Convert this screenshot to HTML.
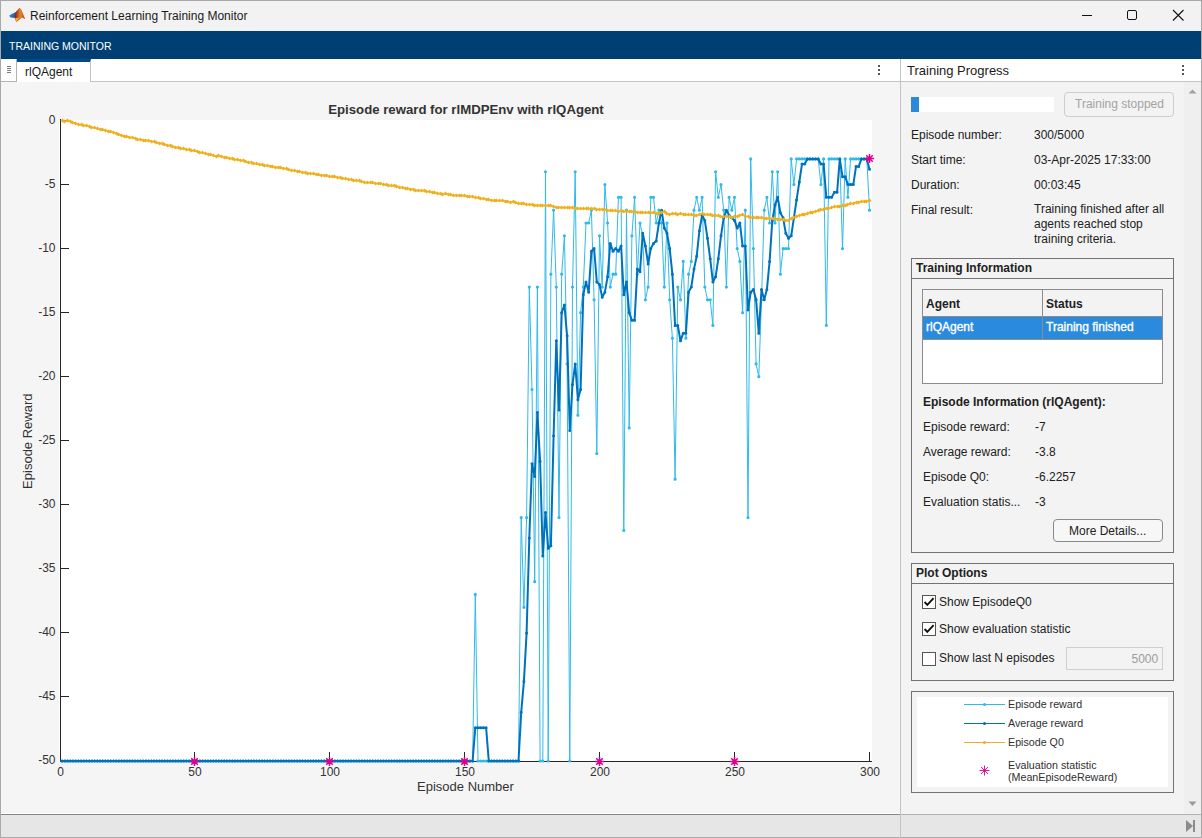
<!DOCTYPE html>
<html><head><meta charset="utf-8">
<style>
*{box-sizing:border-box;margin:0;padding:0}
html,body{width:1202px;height:838px;overflow:hidden;background:#f3f3f3;font-family:"Liberation Sans",sans-serif;color:#212121}
.a{position:absolute}
.t{position:absolute;white-space:nowrap;line-height:1}
#win{position:absolute;left:0;top:0;width:1202px;height:838px;border:1px solid #a9a9a9;border-bottom:none}
#titlebar{left:0;top:0;width:1202px;height:31px;background:#f2f2f2}
#toolbar{left:1px;top:31px;width:1200px;height:28px;background:#003f73}
#tabrow{left:1px;top:59px;width:1200px;height:23px;background:#fff;border-bottom:1px solid #c4c4c4}
#leftdoc{left:1px;top:82px;width:899px;height:732px;background:#f5f5f5}
#divider{left:900px;top:59px;width:1px;height:779px;background:#c4c4c4}
#rightpanel{left:901px;top:82px;width:300px;height:732px;background:#f3f3f3}
#scroll{left:1184px;top:82px;width:17px;height:732px;background:#efefef}
#status{left:1px;top:814px;width:1200px;height:23px;background:#e6e6e6;border-top:1px solid #b3b3b3}
.box{position:absolute;border:1px solid #727272}
.lbl{font-size:12px;margin-top:1px}
</style></head><body>
<div id="win"></div>
<div class="a" id="titlebar"></div>
<div class="a" style="left:0;top:0;width:1202px;height:1px;background:#a9a9a9"></div>
<div class="a" style="left:0;top:0;width:1px;height:838px;background:#a9a9a9"></div>
<div class="a" style="left:1201px;top:0;width:1px;height:838px;background:#a9a9a9"></div>
<!-- logo -->
<svg class="a" style="left:0;top:0" width="30" height="30" viewBox="0 0 30 30">
  <defs>
    <linearGradient id="lg1" x1="0" y1="0" x2="1" y2="0.3"><stop offset="0" stop-color="#2f86d6"/><stop offset="1" stop-color="#1a5fae"/></linearGradient>
    <linearGradient id="lg2" x1="0" y1="0" x2="1" y2="0"><stop offset="0" stop-color="#7a1616"/><stop offset="0.55" stop-color="#e8852a"/><stop offset="1" stop-color="#c9361c"/></linearGradient>
  </defs>
  <path d="M9.3 15.6 L12.8 13.4 L15.6 12.2 L18.4 9.6 L19.8 8 L17 15 L15.8 17 L13.2 17.9 L10.2 17.2 Z" fill="url(#lg1)"/>
  <path d="M15 13.2 L19.4 7.8 L21.2 9.2 L25.2 19.2 L22.2 17.4 L16.4 21.9 L14.4 17.4 Z" fill="url(#lg2)"/>
  <path d="M16.4 21.9 L14.9 18.5 L19.5 17.2 Z" fill="#f2b12e"/>
</svg>
<div class="t" style="left:30px;top:10px;font-size:12px;color:#1a1a1a">Reinforcement Learning Training Monitor</div>
<!-- window controls -->
<div class="a" style="left:1082px;top:15px;width:10px;height:1px;background:#111"></div>
<div class="a" style="left:1127px;top:10px;width:10px;height:10px;border:1px solid #111;border-radius:2px"></div>
<svg class="a" style="left:1172px;top:9px" width="13" height="13" viewBox="0 0 13 13"><path d="M1 1 L11.5 11.5 M11.5 1 L1 11.5" stroke="#111" stroke-width="1.1"/></svg>

<div class="a" id="toolbar"></div>
<div class="t" style="left:9px;top:41px;font-size:10.5px;color:#fff">TRAINING MONITOR</div>

<div class="a" id="tabrow"></div>
<div class="a" style="left:1px;top:59px;width:16px;height:23px;background:#fff;border-right:1px solid #b4b4b4;border-bottom:1px solid #b4b4b4"></div>
<div class="a" style="left:7px;top:66px;width:4px;height:1px;background:#7a7a7a;box-shadow:0 2px 0 #7a7a7a,0 4px 0 #7a7a7a,0 6px 0 #7a7a7a"></div>
<div class="a" style="left:17px;top:59px;width:74px;height:23px;background:#fff;border-top:3px solid #004a8a;border-right:1px solid #c4c4c4"></div>
<div class="t" style="left:25px;top:66px;font-size:12px;color:#1a1a1a">rlQAgent</div>
<div class="a" id="leftdoc"></div>
<div class="a" id="rightpanel"></div>
<div class="a" id="scroll"></div>
<div class="a" id="status"></div>
<div class="a" style="left:1px;top:813px;width:899px;height:1px;background:#fff"></div>
<div class="a" style="left:1px;top:814px;width:899px;height:1px;background:#858585"></div>
<div class="a" style="left:0;top:837px;width:1202px;height:1px;background:#a9a9a9"></div>
<div class="a" id="divider"></div>

<svg class="a" style="left:0;top:0" width="900" height="814" viewBox="0 0 900 814">
<rect x="59" y="120" width="813" height="642" fill="#fff"/>
<path d="M60.5 119V761.5M60 761.5H872" stroke="#262626" stroke-width="1" fill="none"/>
<path d="M60 120.5h9M60 184.5h9M60 248.5h9M60 312.5h9M60 376.5h9M60 440.5h9M60 504.5h9M60 568.5h9M60 632.5h9M60 696.5h9M60 761.5h9M60.5 761v-9M194.5 761v-9M329.5 761v-9M464.5 761v-9M599.5 761v-9M734.5 761v-9M869.5 761v-9" stroke="#262626" stroke-width="1" fill="none"/>
<polyline points="62.20,761.00 64.90,761.00 67.60,761.00 70.30,761.00 73.00,761.00 75.70,761.00 78.40,761.00 81.10,761.00 83.80,761.00 86.50,761.00 89.20,761.00 91.90,761.00 94.60,761.00 97.30,761.00 100.00,761.00 102.70,761.00 105.40,761.00 108.10,761.00 110.80,761.00 113.50,761.00 116.20,761.00 118.90,761.00 121.60,761.00 124.30,761.00 127.00,761.00 129.70,761.00 132.40,761.00 135.10,761.00 137.80,761.00 140.50,761.00 143.20,761.00 145.90,761.00 148.60,761.00 151.30,761.00 154.00,761.00 156.70,761.00 159.40,761.00 162.10,761.00 164.80,761.00 167.50,761.00 170.20,761.00 172.90,761.00 175.60,761.00 178.30,761.00 181.00,761.00 183.70,761.00 186.40,761.00 189.10,761.00 191.80,761.00 194.50,761.00 197.20,761.00 199.90,761.00 202.60,761.00 205.30,761.00 208.00,761.00 210.70,761.00 213.40,761.00 216.10,761.00 218.80,761.00 221.50,761.00 224.20,761.00 226.90,761.00 229.60,761.00 232.30,761.00 235.00,761.00 237.70,761.00 240.40,761.00 243.10,761.00 245.80,761.00 248.50,761.00 251.20,761.00 253.90,761.00 256.60,761.00 259.30,761.00 262.00,761.00 264.70,761.00 267.40,761.00 270.10,761.00 272.80,761.00 275.50,761.00 278.20,761.00 280.90,761.00 283.60,761.00 286.30,761.00 289.00,761.00 291.70,761.00 294.40,761.00 297.10,761.00 299.80,761.00 302.50,761.00 305.20,761.00 307.90,761.00 310.60,761.00 313.30,761.00 316.00,761.00 318.70,761.00 321.40,761.00 324.10,761.00 326.80,761.00 329.50,761.00 332.20,761.00 334.90,761.00 337.60,761.00 340.30,761.00 343.00,761.00 345.70,761.00 348.40,761.00 351.10,761.00 353.80,761.00 356.50,761.00 359.20,761.00 361.90,761.00 364.60,761.00 367.30,761.00 370.00,761.00 372.70,761.00 375.40,761.00 378.10,761.00 380.80,761.00 383.50,761.00 386.20,761.00 388.90,761.00 391.60,761.00 394.30,761.00 397.00,761.00 399.70,761.00 402.40,761.00 405.10,761.00 407.80,761.00 410.50,761.00 413.20,761.00 415.90,761.00 418.60,761.00 421.30,761.00 424.00,761.00 426.70,761.00 429.40,761.00 432.10,761.00 434.80,761.00 437.50,761.00 440.20,761.00 442.90,761.00 445.60,761.00 448.30,761.00 451.00,761.00 453.70,761.00 456.40,761.00 459.10,761.00 461.80,761.00 464.50,761.00 467.20,761.00 469.90,761.00 472.60,761.00 475.30,594.47 478.00,761.00 480.70,761.00 483.40,761.00 486.10,761.00 488.80,761.00 491.50,761.00 494.20,761.00 496.90,761.00 499.60,761.00 502.30,761.00 505.00,761.00 507.70,761.00 510.40,761.00 513.10,761.00 515.80,761.00 518.50,761.00 521.20,517.61 523.90,607.28 526.60,517.61 529.30,287.03 532.00,389.51 534.70,581.66 537.40,287.03 540.10,761.00 542.80,761.00 545.50,171.74 548.20,761.00 550.90,274.22 553.60,210.17 556.30,287.03 559.00,517.61 561.70,274.22 564.40,235.79 567.10,363.89 569.80,761.00 572.50,287.03 575.20,171.74 577.90,415.13 580.60,312.65 583.30,287.03 586.00,222.98 588.70,222.98 591.40,210.17 594.10,299.84 596.80,453.56 599.50,235.79 602.20,287.03 604.90,184.55 607.60,222.98 610.30,287.03 613.00,274.22 615.70,274.22 618.40,197.36 621.10,197.36 623.80,530.42 626.50,210.17 629.20,427.94 631.90,235.79 634.60,197.36 637.30,274.22 640.00,222.98 642.70,235.79 645.40,299.84 648.10,287.03 650.80,197.36 653.50,197.36 656.20,222.98 658.90,210.17 661.60,222.98 664.30,287.03 667.00,222.98 669.70,299.84 672.40,338.27 675.10,479.18 677.80,287.03 680.50,299.84 683.20,261.41 685.90,338.27 688.60,274.22 691.30,261.41 694.00,210.17 696.70,197.36 699.40,210.17 702.10,197.36 704.80,287.03 707.50,299.84 710.20,299.84 712.90,325.46 715.60,171.74 718.30,197.36 721.00,184.55 723.70,210.17 726.40,287.03 729.10,197.36 731.80,210.17 734.50,197.36 737.20,248.60 739.90,261.41 742.60,312.65 745.30,210.17 748.00,517.61 750.70,158.93 753.40,248.60 756.10,363.89 758.80,376.70 761.50,299.84 764.20,210.17 766.90,197.36 769.60,222.98 772.30,171.74 775.00,222.98 777.70,171.74 780.40,274.22 783.10,248.60 785.80,248.60 788.50,248.60 791.20,158.93 793.90,184.55 796.60,158.93 799.30,158.93 802.00,158.93 804.70,158.93 807.40,158.93 810.10,158.93 812.80,158.93 815.50,158.93 818.20,158.93 820.90,184.55 823.60,158.93 826.30,325.46 829.00,158.93 831.70,158.93 834.40,158.93 837.10,158.93 839.80,158.93 842.50,248.60 845.20,158.93 847.90,197.36 850.60,158.93 853.30,158.93 856.00,158.93 858.70,158.93 861.40,158.93 864.10,158.93 866.80,158.93 869.50,210.17" fill="none" stroke="#30baec" stroke-width="1" stroke-linejoin="round"/>
<path d="M62.20 761.00h0M64.90 761.00h0M67.60 761.00h0M70.30 761.00h0M73.00 761.00h0M75.70 761.00h0M78.40 761.00h0M81.10 761.00h0M83.80 761.00h0M86.50 761.00h0M89.20 761.00h0M91.90 761.00h0M94.60 761.00h0M97.30 761.00h0M100.00 761.00h0M102.70 761.00h0M105.40 761.00h0M108.10 761.00h0M110.80 761.00h0M113.50 761.00h0M116.20 761.00h0M118.90 761.00h0M121.60 761.00h0M124.30 761.00h0M127.00 761.00h0M129.70 761.00h0M132.40 761.00h0M135.10 761.00h0M137.80 761.00h0M140.50 761.00h0M143.20 761.00h0M145.90 761.00h0M148.60 761.00h0M151.30 761.00h0M154.00 761.00h0M156.70 761.00h0M159.40 761.00h0M162.10 761.00h0M164.80 761.00h0M167.50 761.00h0M170.20 761.00h0M172.90 761.00h0M175.60 761.00h0M178.30 761.00h0M181.00 761.00h0M183.70 761.00h0M186.40 761.00h0M189.10 761.00h0M191.80 761.00h0M194.50 761.00h0M197.20 761.00h0M199.90 761.00h0M202.60 761.00h0M205.30 761.00h0M208.00 761.00h0M210.70 761.00h0M213.40 761.00h0M216.10 761.00h0M218.80 761.00h0M221.50 761.00h0M224.20 761.00h0M226.90 761.00h0M229.60 761.00h0M232.30 761.00h0M235.00 761.00h0M237.70 761.00h0M240.40 761.00h0M243.10 761.00h0M245.80 761.00h0M248.50 761.00h0M251.20 761.00h0M253.90 761.00h0M256.60 761.00h0M259.30 761.00h0M262.00 761.00h0M264.70 761.00h0M267.40 761.00h0M270.10 761.00h0M272.80 761.00h0M275.50 761.00h0M278.20 761.00h0M280.90 761.00h0M283.60 761.00h0M286.30 761.00h0M289.00 761.00h0M291.70 761.00h0M294.40 761.00h0M297.10 761.00h0M299.80 761.00h0M302.50 761.00h0M305.20 761.00h0M307.90 761.00h0M310.60 761.00h0M313.30 761.00h0M316.00 761.00h0M318.70 761.00h0M321.40 761.00h0M324.10 761.00h0M326.80 761.00h0M329.50 761.00h0M332.20 761.00h0M334.90 761.00h0M337.60 761.00h0M340.30 761.00h0M343.00 761.00h0M345.70 761.00h0M348.40 761.00h0M351.10 761.00h0M353.80 761.00h0M356.50 761.00h0M359.20 761.00h0M361.90 761.00h0M364.60 761.00h0M367.30 761.00h0M370.00 761.00h0M372.70 761.00h0M375.40 761.00h0M378.10 761.00h0M380.80 761.00h0M383.50 761.00h0M386.20 761.00h0M388.90 761.00h0M391.60 761.00h0M394.30 761.00h0M397.00 761.00h0M399.70 761.00h0M402.40 761.00h0M405.10 761.00h0M407.80 761.00h0M410.50 761.00h0M413.20 761.00h0M415.90 761.00h0M418.60 761.00h0M421.30 761.00h0M424.00 761.00h0M426.70 761.00h0M429.40 761.00h0M432.10 761.00h0M434.80 761.00h0M437.50 761.00h0M440.20 761.00h0M442.90 761.00h0M445.60 761.00h0M448.30 761.00h0M451.00 761.00h0M453.70 761.00h0M456.40 761.00h0M459.10 761.00h0M461.80 761.00h0M464.50 761.00h0M467.20 761.00h0M469.90 761.00h0M472.60 761.00h0M475.30 594.47h0M478.00 761.00h0M480.70 761.00h0M483.40 761.00h0M486.10 761.00h0M488.80 761.00h0M491.50 761.00h0M494.20 761.00h0M496.90 761.00h0M499.60 761.00h0M502.30 761.00h0M505.00 761.00h0M507.70 761.00h0M510.40 761.00h0M513.10 761.00h0M515.80 761.00h0M518.50 761.00h0M521.20 517.61h0M523.90 607.28h0M526.60 517.61h0M529.30 287.03h0M532.00 389.51h0M534.70 581.66h0M537.40 287.03h0M540.10 761.00h0M542.80 761.00h0M545.50 171.74h0M548.20 761.00h0M550.90 274.22h0M553.60 210.17h0M556.30 287.03h0M559.00 517.61h0M561.70 274.22h0M564.40 235.79h0M567.10 363.89h0M569.80 761.00h0M572.50 287.03h0M575.20 171.74h0M577.90 415.13h0M580.60 312.65h0M583.30 287.03h0M586.00 222.98h0M588.70 222.98h0M591.40 210.17h0M594.10 299.84h0M596.80 453.56h0M599.50 235.79h0M602.20 287.03h0M604.90 184.55h0M607.60 222.98h0M610.30 287.03h0M613.00 274.22h0M615.70 274.22h0M618.40 197.36h0M621.10 197.36h0M623.80 530.42h0M626.50 210.17h0M629.20 427.94h0M631.90 235.79h0M634.60 197.36h0M637.30 274.22h0M640.00 222.98h0M642.70 235.79h0M645.40 299.84h0M648.10 287.03h0M650.80 197.36h0M653.50 197.36h0M656.20 222.98h0M658.90 210.17h0M661.60 222.98h0M664.30 287.03h0M667.00 222.98h0M669.70 299.84h0M672.40 338.27h0M675.10 479.18h0M677.80 287.03h0M680.50 299.84h0M683.20 261.41h0M685.90 338.27h0M688.60 274.22h0M691.30 261.41h0M694.00 210.17h0M696.70 197.36h0M699.40 210.17h0M702.10 197.36h0M704.80 287.03h0M707.50 299.84h0M710.20 299.84h0M712.90 325.46h0M715.60 171.74h0M718.30 197.36h0M721.00 184.55h0M723.70 210.17h0M726.40 287.03h0M729.10 197.36h0M731.80 210.17h0M734.50 197.36h0M737.20 248.60h0M739.90 261.41h0M742.60 312.65h0M745.30 210.17h0M748.00 517.61h0M750.70 158.93h0M753.40 248.60h0M756.10 363.89h0M758.80 376.70h0M761.50 299.84h0M764.20 210.17h0M766.90 197.36h0M769.60 222.98h0M772.30 171.74h0M775.00 222.98h0M777.70 171.74h0M780.40 274.22h0M783.10 248.60h0M785.80 248.60h0M788.50 248.60h0M791.20 158.93h0M793.90 184.55h0M796.60 158.93h0M799.30 158.93h0M802.00 158.93h0M804.70 158.93h0M807.40 158.93h0M810.10 158.93h0M812.80 158.93h0M815.50 158.93h0M818.20 158.93h0M820.90 184.55h0M823.60 158.93h0M826.30 325.46h0M829.00 158.93h0M831.70 158.93h0M834.40 158.93h0M837.10 158.93h0M839.80 158.93h0M842.50 248.60h0M845.20 158.93h0M847.90 197.36h0M850.60 158.93h0M853.30 158.93h0M856.00 158.93h0M858.70 158.93h0M861.40 158.93h0M864.10 158.93h0M866.80 158.93h0M869.50 210.17h0" stroke="#30baec" stroke-width="3.2" stroke-linecap="round"/>
<polyline points="62.20,761.00 64.90,761.00 67.60,761.00 70.30,761.00 73.00,761.00 75.70,761.00 78.40,761.00 81.10,761.00 83.80,761.00 86.50,761.00 89.20,761.00 91.90,761.00 94.60,761.00 97.30,761.00 100.00,761.00 102.70,761.00 105.40,761.00 108.10,761.00 110.80,761.00 113.50,761.00 116.20,761.00 118.90,761.00 121.60,761.00 124.30,761.00 127.00,761.00 129.70,761.00 132.40,761.00 135.10,761.00 137.80,761.00 140.50,761.00 143.20,761.00 145.90,761.00 148.60,761.00 151.30,761.00 154.00,761.00 156.70,761.00 159.40,761.00 162.10,761.00 164.80,761.00 167.50,761.00 170.20,761.00 172.90,761.00 175.60,761.00 178.30,761.00 181.00,761.00 183.70,761.00 186.40,761.00 189.10,761.00 191.80,761.00 194.50,761.00 197.20,761.00 199.90,761.00 202.60,761.00 205.30,761.00 208.00,761.00 210.70,761.00 213.40,761.00 216.10,761.00 218.80,761.00 221.50,761.00 224.20,761.00 226.90,761.00 229.60,761.00 232.30,761.00 235.00,761.00 237.70,761.00 240.40,761.00 243.10,761.00 245.80,761.00 248.50,761.00 251.20,761.00 253.90,761.00 256.60,761.00 259.30,761.00 262.00,761.00 264.70,761.00 267.40,761.00 270.10,761.00 272.80,761.00 275.50,761.00 278.20,761.00 280.90,761.00 283.60,761.00 286.30,761.00 289.00,761.00 291.70,761.00 294.40,761.00 297.10,761.00 299.80,761.00 302.50,761.00 305.20,761.00 307.90,761.00 310.60,761.00 313.30,761.00 316.00,761.00 318.70,761.00 321.40,761.00 324.10,761.00 326.80,761.00 329.50,761.00 332.20,761.00 334.90,761.00 337.60,761.00 340.30,761.00 343.00,761.00 345.70,761.00 348.40,761.00 351.10,761.00 353.80,761.00 356.50,761.00 359.20,761.00 361.90,761.00 364.60,761.00 367.30,761.00 370.00,761.00 372.70,761.00 375.40,761.00 378.10,761.00 380.80,761.00 383.50,761.00 386.20,761.00 388.90,761.00 391.60,761.00 394.30,761.00 397.00,761.00 399.70,761.00 402.40,761.00 405.10,761.00 407.80,761.00 410.50,761.00 413.20,761.00 415.90,761.00 418.60,761.00 421.30,761.00 424.00,761.00 426.70,761.00 429.40,761.00 432.10,761.00 434.80,761.00 437.50,761.00 440.20,761.00 442.90,761.00 445.60,761.00 448.30,761.00 451.00,761.00 453.70,761.00 456.40,761.00 459.10,761.00 461.80,761.00 464.50,761.00 467.20,761.00 469.90,761.00 472.60,761.00 475.30,727.69 478.00,727.69 480.70,727.69 483.40,727.69 486.10,727.69 488.80,761.00 491.50,761.00 494.20,761.00 496.90,761.00 499.60,761.00 502.30,761.00 505.00,761.00 507.70,761.00 510.40,761.00 513.10,761.00 515.80,761.00 518.50,761.00 521.20,712.32 523.90,681.58 526.60,632.90 529.30,538.11 532.00,463.81 534.70,476.62 537.40,412.57 540.10,461.25 542.80,556.04 545.50,512.49 548.20,548.35 550.90,545.79 553.60,435.63 556.30,340.83 559.00,410.01 561.70,312.65 564.40,304.96 567.10,335.71 569.80,430.50 572.50,384.39 575.20,363.89 577.90,399.76 580.60,389.51 583.30,294.72 586.00,281.91 588.70,292.15 591.40,251.16 594.10,248.60 596.80,281.91 599.50,284.47 602.20,297.28 604.90,292.15 607.60,276.78 610.30,243.48 613.00,251.16 615.70,248.60 618.40,251.16 621.10,246.04 623.80,294.72 626.50,281.91 629.20,312.65 631.90,320.34 634.60,320.34 637.30,269.10 640.00,271.66 642.70,233.23 645.40,246.04 648.10,263.97 650.80,248.60 653.50,243.48 656.20,240.91 658.90,222.98 661.60,210.17 664.30,228.10 667.00,233.23 669.70,248.60 672.40,274.22 675.10,325.46 677.80,325.46 680.50,340.83 683.20,333.15 685.90,333.15 688.60,292.15 691.30,287.03 694.00,269.10 696.70,256.29 699.40,230.67 702.10,215.29 704.80,220.42 707.50,238.35 710.20,258.85 712.90,281.91 715.60,276.78 718.30,258.85 721.00,235.79 723.70,217.86 726.40,210.17 729.10,215.29 731.80,217.86 734.50,220.42 737.20,228.10 739.90,222.98 742.60,246.04 745.30,246.04 748.00,310.09 750.70,292.15 753.40,289.59 756.10,299.84 758.80,333.15 761.50,289.59 764.20,299.84 766.90,289.59 769.60,261.41 772.30,220.42 775.00,205.05 777.70,197.36 780.40,212.73 783.10,217.86 785.80,233.23 788.50,238.35 791.20,235.79 793.90,217.86 796.60,199.92 799.30,181.99 802.00,164.05 804.70,164.05 807.40,158.93 810.10,158.93 812.80,158.93 815.50,158.93 818.20,158.93 820.90,164.05 823.60,164.05 826.30,197.36 829.00,197.36 831.70,197.36 834.40,192.24 837.10,192.24 839.80,158.93 842.50,176.86 845.20,176.86 847.90,184.55 850.60,184.55 853.30,184.55 856.00,166.62 858.70,166.62 861.40,158.93 864.10,158.93 866.80,158.93 869.50,169.18" fill="none" stroke="#0072bd" stroke-width="2" stroke-linejoin="round"/>
<path d="M62.20 761.00h0M64.90 761.00h0M67.60 761.00h0M70.30 761.00h0M73.00 761.00h0M75.70 761.00h0M78.40 761.00h0M81.10 761.00h0M83.80 761.00h0M86.50 761.00h0M89.20 761.00h0M91.90 761.00h0M94.60 761.00h0M97.30 761.00h0M100.00 761.00h0M102.70 761.00h0M105.40 761.00h0M108.10 761.00h0M110.80 761.00h0M113.50 761.00h0M116.20 761.00h0M118.90 761.00h0M121.60 761.00h0M124.30 761.00h0M127.00 761.00h0M129.70 761.00h0M132.40 761.00h0M135.10 761.00h0M137.80 761.00h0M140.50 761.00h0M143.20 761.00h0M145.90 761.00h0M148.60 761.00h0M151.30 761.00h0M154.00 761.00h0M156.70 761.00h0M159.40 761.00h0M162.10 761.00h0M164.80 761.00h0M167.50 761.00h0M170.20 761.00h0M172.90 761.00h0M175.60 761.00h0M178.30 761.00h0M181.00 761.00h0M183.70 761.00h0M186.40 761.00h0M189.10 761.00h0M191.80 761.00h0M194.50 761.00h0M197.20 761.00h0M199.90 761.00h0M202.60 761.00h0M205.30 761.00h0M208.00 761.00h0M210.70 761.00h0M213.40 761.00h0M216.10 761.00h0M218.80 761.00h0M221.50 761.00h0M224.20 761.00h0M226.90 761.00h0M229.60 761.00h0M232.30 761.00h0M235.00 761.00h0M237.70 761.00h0M240.40 761.00h0M243.10 761.00h0M245.80 761.00h0M248.50 761.00h0M251.20 761.00h0M253.90 761.00h0M256.60 761.00h0M259.30 761.00h0M262.00 761.00h0M264.70 761.00h0M267.40 761.00h0M270.10 761.00h0M272.80 761.00h0M275.50 761.00h0M278.20 761.00h0M280.90 761.00h0M283.60 761.00h0M286.30 761.00h0M289.00 761.00h0M291.70 761.00h0M294.40 761.00h0M297.10 761.00h0M299.80 761.00h0M302.50 761.00h0M305.20 761.00h0M307.90 761.00h0M310.60 761.00h0M313.30 761.00h0M316.00 761.00h0M318.70 761.00h0M321.40 761.00h0M324.10 761.00h0M326.80 761.00h0M329.50 761.00h0M332.20 761.00h0M334.90 761.00h0M337.60 761.00h0M340.30 761.00h0M343.00 761.00h0M345.70 761.00h0M348.40 761.00h0M351.10 761.00h0M353.80 761.00h0M356.50 761.00h0M359.20 761.00h0M361.90 761.00h0M364.60 761.00h0M367.30 761.00h0M370.00 761.00h0M372.70 761.00h0M375.40 761.00h0M378.10 761.00h0M380.80 761.00h0M383.50 761.00h0M386.20 761.00h0M388.90 761.00h0M391.60 761.00h0M394.30 761.00h0M397.00 761.00h0M399.70 761.00h0M402.40 761.00h0M405.10 761.00h0M407.80 761.00h0M410.50 761.00h0M413.20 761.00h0M415.90 761.00h0M418.60 761.00h0M421.30 761.00h0M424.00 761.00h0M426.70 761.00h0M429.40 761.00h0M432.10 761.00h0M434.80 761.00h0M437.50 761.00h0M440.20 761.00h0M442.90 761.00h0M445.60 761.00h0M448.30 761.00h0M451.00 761.00h0M453.70 761.00h0M456.40 761.00h0M459.10 761.00h0M461.80 761.00h0M464.50 761.00h0M467.20 761.00h0M469.90 761.00h0M472.60 761.00h0M475.30 727.69h0M478.00 727.69h0M480.70 727.69h0M483.40 727.69h0M486.10 727.69h0M488.80 761.00h0M491.50 761.00h0M494.20 761.00h0M496.90 761.00h0M499.60 761.00h0M502.30 761.00h0M505.00 761.00h0M507.70 761.00h0M510.40 761.00h0M513.10 761.00h0M515.80 761.00h0M518.50 761.00h0M521.20 712.32h0M523.90 681.58h0M526.60 632.90h0M529.30 538.11h0M532.00 463.81h0M534.70 476.62h0M537.40 412.57h0M540.10 461.25h0M542.80 556.04h0M545.50 512.49h0M548.20 548.35h0M550.90 545.79h0M553.60 435.63h0M556.30 340.83h0M559.00 410.01h0M561.70 312.65h0M564.40 304.96h0M567.10 335.71h0M569.80 430.50h0M572.50 384.39h0M575.20 363.89h0M577.90 399.76h0M580.60 389.51h0M583.30 294.72h0M586.00 281.91h0M588.70 292.15h0M591.40 251.16h0M594.10 248.60h0M596.80 281.91h0M599.50 284.47h0M602.20 297.28h0M604.90 292.15h0M607.60 276.78h0M610.30 243.48h0M613.00 251.16h0M615.70 248.60h0M618.40 251.16h0M621.10 246.04h0M623.80 294.72h0M626.50 281.91h0M629.20 312.65h0M631.90 320.34h0M634.60 320.34h0M637.30 269.10h0M640.00 271.66h0M642.70 233.23h0M645.40 246.04h0M648.10 263.97h0M650.80 248.60h0M653.50 243.48h0M656.20 240.91h0M658.90 222.98h0M661.60 210.17h0M664.30 228.10h0M667.00 233.23h0M669.70 248.60h0M672.40 274.22h0M675.10 325.46h0M677.80 325.46h0M680.50 340.83h0M683.20 333.15h0M685.90 333.15h0M688.60 292.15h0M691.30 287.03h0M694.00 269.10h0M696.70 256.29h0M699.40 230.67h0M702.10 215.29h0M704.80 220.42h0M707.50 238.35h0M710.20 258.85h0M712.90 281.91h0M715.60 276.78h0M718.30 258.85h0M721.00 235.79h0M723.70 217.86h0M726.40 210.17h0M729.10 215.29h0M731.80 217.86h0M734.50 220.42h0M737.20 228.10h0M739.90 222.98h0M742.60 246.04h0M745.30 246.04h0M748.00 310.09h0M750.70 292.15h0M753.40 289.59h0M756.10 299.84h0M758.80 333.15h0M761.50 289.59h0M764.20 299.84h0M766.90 289.59h0M769.60 261.41h0M772.30 220.42h0M775.00 205.05h0M777.70 197.36h0M780.40 212.73h0M783.10 217.86h0M785.80 233.23h0M788.50 238.35h0M791.20 235.79h0M793.90 217.86h0M796.60 199.92h0M799.30 181.99h0M802.00 164.05h0M804.70 164.05h0M807.40 158.93h0M810.10 158.93h0M812.80 158.93h0M815.50 158.93h0M818.20 158.93h0M820.90 164.05h0M823.60 164.05h0M826.30 197.36h0M829.00 197.36h0M831.70 197.36h0M834.40 192.24h0M837.10 192.24h0M839.80 158.93h0M842.50 176.86h0M845.20 176.86h0M847.90 184.55h0M850.60 184.55h0M853.30 184.55h0M856.00 166.62h0M858.70 166.62h0M861.40 158.93h0M864.10 158.93h0M866.80 158.93h0M869.50 169.18h0" stroke="#0072bd" stroke-width="3" stroke-linecap="round"/>
<polyline points="62.20,120.50 64.90,121.06 67.60,120.55 70.30,121.63 73.00,122.50 75.70,123.35 78.40,124.41 81.10,124.71 83.80,125.47 86.50,125.31 89.20,126.54 91.90,127.29 94.60,127.93 97.30,128.67 100.00,129.40 102.70,129.93 105.40,130.43 108.10,131.23 110.80,131.70 113.50,132.73 116.20,133.49 118.90,134.01 121.60,135.00 124.30,136.01 127.00,136.74 129.70,137.21 132.40,137.55 135.10,138.58 137.80,139.18 140.50,139.55 143.20,140.53 145.90,140.80 148.60,140.97 151.30,141.42 154.00,141.91 156.70,142.19 159.40,143.25 162.10,143.20 164.80,144.33 167.50,145.23 170.20,145.61 172.90,146.28 175.60,147.26 178.30,148.00 181.00,148.34 183.70,148.92 186.40,149.19 189.10,149.88 191.80,150.54 194.50,150.95 197.20,151.80 199.90,152.54 202.60,152.84 205.30,153.44 208.00,154.20 210.70,154.86 213.40,155.13 216.10,156.12 218.80,155.97 221.50,156.47 224.20,157.34 226.90,157.49 229.60,158.22 232.30,158.43 235.00,159.50 237.70,159.82 240.40,160.05 243.10,160.50 245.80,161.78 248.50,162.10 251.20,162.58 253.90,163.40 256.60,163.62 259.30,164.80 262.00,164.94 264.70,165.60 267.40,165.52 270.10,166.19 272.80,166.65 275.50,167.30 278.20,167.12 280.90,167.81 283.60,168.33 286.30,168.77 289.00,169.44 291.70,170.14 294.40,170.68 297.10,171.16 299.80,171.23 302.50,172.25 305.20,172.57 307.90,173.00 310.60,173.36 313.30,173.70 316.00,174.47 318.70,174.97 321.40,175.05 324.10,175.23 326.80,175.73 329.50,176.23 332.20,176.72 334.90,177.00 337.60,177.50 340.30,177.68 343.00,178.39 345.70,178.70 348.40,179.25 351.10,179.63 353.80,180.20 356.50,180.25 359.20,180.96 361.90,181.31 364.60,182.30 367.30,182.28 370.00,182.64 372.70,182.73 375.40,183.58 378.10,183.29 380.80,183.73 383.50,184.59 386.20,184.94 388.90,185.32 391.60,185.57 394.30,185.93 397.00,186.20 399.70,187.18 402.40,187.54 405.10,188.20 407.80,188.44 410.50,189.12 413.20,189.36 415.90,190.18 418.60,190.36 421.30,190.83 424.00,190.73 426.70,191.26 429.40,191.91 432.10,192.40 434.80,192.68 437.50,193.37 440.20,193.87 442.90,194.07 445.60,193.87 448.30,194.58 451.00,194.82 453.70,195.13 456.40,195.34 459.10,195.17 461.80,195.42 464.50,195.93 467.20,196.21 469.90,196.60 472.60,196.94 475.30,197.61 478.00,197.80 480.70,198.15 483.40,198.77 486.10,199.17 488.80,199.69 491.50,200.05 494.20,200.21 496.90,200.66 499.60,200.82 502.30,200.84 505.00,201.09 507.70,201.09 510.40,202.08 513.10,201.99 515.80,202.73 518.50,203.08 521.20,203.42 523.90,203.85 526.60,204.33 529.30,204.65 532.00,204.52 534.70,205.03 537.40,205.15 540.10,205.12 542.80,205.52 545.50,205.29 548.20,205.82 550.90,205.91 553.60,206.64 556.30,207.02 559.00,207.23 561.70,207.31 564.40,207.71 567.10,207.67 569.80,207.89 572.50,207.72 575.20,208.30 577.90,208.09 580.60,208.50 583.30,208.64 586.00,208.68 588.70,208.86 591.40,208.68 594.10,208.66 596.80,209.08 599.50,209.24 602.20,209.29 604.90,209.80 607.60,210.06 610.30,210.38 613.00,210.81 615.70,210.52 618.40,211.16 621.10,210.87 623.80,211.16 626.50,211.11 629.20,211.50 631.90,211.82 634.60,211.76 637.30,212.10 640.00,212.20 642.70,212.32 645.40,212.50 648.10,212.66 650.80,212.93 653.50,212.95 656.20,213.47 658.90,213.23 661.60,212.84 664.30,211.49 667.00,213.90 669.70,214.45 672.40,213.99 675.10,213.98 677.80,214.10 680.50,213.95 683.20,214.35 685.90,214.80 688.60,214.72 691.30,214.91 694.00,215.07 696.70,215.53 699.40,214.41 702.10,213.62 704.80,214.39 707.50,214.70 710.20,215.00 712.90,215.50 715.60,215.41 718.30,215.93 721.00,216.39 723.70,216.58 726.40,216.66 729.10,216.44 731.80,217.14 734.50,216.92 737.20,216.29 739.90,215.85 742.60,214.86 745.30,216.06 748.00,216.47 750.70,217.24 753.40,217.44 756.10,217.92 758.80,217.49 761.50,217.98 764.20,218.08 766.90,218.40 769.60,218.50 772.30,218.53 775.00,218.75 777.70,219.10 780.40,219.31 783.10,219.71 785.80,220.14 788.50,220.14 791.20,218.97 793.90,217.88 796.60,216.51 799.30,215.23 802.00,214.67 804.70,214.02 807.40,213.11 810.10,212.27 812.80,212.05 815.50,211.40 818.20,210.79 820.90,209.91 823.60,209.87 826.30,208.85 829.00,208.11 831.70,207.91 834.40,206.88 837.10,206.48 839.80,206.11 842.50,205.38 845.20,205.16 847.90,204.43 850.60,203.42 853.30,203.40 856.00,202.33 858.70,202.15 861.40,201.40 864.10,201.13 866.80,201.13 869.50,200.25" fill="none" stroke="#edb120" stroke-width="1" stroke-linejoin="round"/>
<path d="M60.5 120.5L62.5 118.5L64.5 120.5L62.5 122.5ZM62.5 121.5L64.5 119.5L66.5 121.5L64.5 123.5ZM65.5 120.5L67.5 118.5L69.5 120.5L67.5 122.5ZM68.5 121.5L70.5 119.5L72.5 121.5L70.5 123.5ZM70.5 122.5L72.5 120.5L74.5 122.5L72.5 124.5ZM73.5 123.5L75.5 121.5L77.5 123.5L75.5 125.5ZM76.5 124.5L78.5 122.5L80.5 124.5L78.5 126.5ZM79.5 124.5L81.5 122.5L83.5 124.5L81.5 126.5ZM81.5 125.5L83.5 123.5L85.5 125.5L83.5 127.5ZM84.5 125.5L86.5 123.5L88.5 125.5L86.5 127.5ZM87.5 126.5L89.5 124.5L91.5 126.5L89.5 128.5ZM89.5 127.5L91.5 125.5L93.5 127.5L91.5 129.5ZM92.5 127.5L94.5 125.5L96.5 127.5L94.5 129.5ZM95.5 128.5L97.5 126.5L99.5 128.5L97.5 130.5ZM98.5 129.5L100.5 127.5L102.5 129.5L100.5 131.5ZM100.5 129.5L102.5 127.5L104.5 129.5L102.5 131.5ZM103.5 130.5L105.5 128.5L107.5 130.5L105.5 132.5ZM106.5 131.5L108.5 129.5L110.5 131.5L108.5 133.5ZM108.5 131.5L110.5 129.5L112.5 131.5L110.5 133.5ZM111.5 132.5L113.5 130.5L115.5 132.5L113.5 134.5ZM114.5 133.5L116.5 131.5L118.5 133.5L116.5 135.5ZM116.5 134.5L118.5 132.5L120.5 134.5L118.5 136.5ZM119.5 135.5L121.5 133.5L123.5 135.5L121.5 137.5ZM122.5 136.5L124.5 134.5L126.5 136.5L124.5 138.5ZM124.5 136.5L126.5 134.5L128.5 136.5L126.5 138.5ZM127.5 137.5L129.5 135.5L131.5 137.5L129.5 139.5ZM130.5 137.5L132.5 135.5L134.5 137.5L132.5 139.5ZM133.5 138.5L135.5 136.5L137.5 138.5L135.5 140.5ZM135.5 139.5L137.5 137.5L139.5 139.5L137.5 141.5ZM138.5 139.5L140.5 137.5L142.5 139.5L140.5 141.5ZM141.5 140.5L143.5 138.5L145.5 140.5L143.5 142.5ZM143.5 140.5L145.5 138.5L147.5 140.5L145.5 142.5ZM146.5 140.5L148.5 138.5L150.5 140.5L148.5 142.5ZM149.5 141.5L151.5 139.5L153.5 141.5L151.5 143.5ZM152.5 141.5L154.5 139.5L156.5 141.5L154.5 143.5ZM154.5 142.5L156.5 140.5L158.5 142.5L156.5 144.5ZM157.5 143.5L159.5 141.5L161.5 143.5L159.5 145.5ZM160.5 143.5L162.5 141.5L164.5 143.5L162.5 145.5ZM162.5 144.5L164.5 142.5L166.5 144.5L164.5 146.5ZM165.5 145.5L167.5 143.5L169.5 145.5L167.5 147.5ZM168.5 145.5L170.5 143.5L172.5 145.5L170.5 147.5ZM170.5 146.5L172.5 144.5L174.5 146.5L172.5 148.5ZM173.5 147.5L175.5 145.5L177.5 147.5L175.5 149.5ZM176.5 147.5L178.5 145.5L180.5 147.5L178.5 149.5ZM178.5 148.5L180.5 146.5L182.5 148.5L180.5 150.5ZM181.5 148.5L183.5 146.5L185.5 148.5L183.5 150.5ZM184.5 149.5L186.5 147.5L188.5 149.5L186.5 151.5ZM187.5 149.5L189.5 147.5L191.5 149.5L189.5 151.5ZM189.5 150.5L191.5 148.5L193.5 150.5L191.5 152.5ZM192.5 150.5L194.5 148.5L196.5 150.5L194.5 152.5ZM195.5 151.5L197.5 149.5L199.5 151.5L197.5 153.5ZM197.5 152.5L199.5 150.5L201.5 152.5L199.5 154.5ZM200.5 152.5L202.5 150.5L204.5 152.5L202.5 154.5ZM203.5 153.5L205.5 151.5L207.5 153.5L205.5 155.5ZM206.5 154.5L208.5 152.5L210.5 154.5L208.5 156.5ZM208.5 154.5L210.5 152.5L212.5 154.5L210.5 156.5ZM211.5 155.5L213.5 153.5L215.5 155.5L213.5 157.5ZM214.5 156.5L216.5 154.5L218.5 156.5L216.5 158.5ZM216.5 155.5L218.5 153.5L220.5 155.5L218.5 157.5ZM219.5 156.5L221.5 154.5L223.5 156.5L221.5 158.5ZM222.5 157.5L224.5 155.5L226.5 157.5L224.5 159.5ZM224.5 157.5L226.5 155.5L228.5 157.5L226.5 159.5ZM227.5 158.5L229.5 156.5L231.5 158.5L229.5 160.5ZM230.5 158.5L232.5 156.5L234.5 158.5L232.5 160.5ZM232.5 159.5L234.5 157.5L236.5 159.5L234.5 161.5ZM235.5 159.5L237.5 157.5L239.5 159.5L237.5 161.5ZM238.5 160.5L240.5 158.5L242.5 160.5L240.5 162.5ZM241.5 160.5L243.5 158.5L245.5 160.5L243.5 162.5ZM243.5 161.5L245.5 159.5L247.5 161.5L245.5 163.5ZM246.5 162.5L248.5 160.5L250.5 162.5L248.5 164.5ZM249.5 162.5L251.5 160.5L253.5 162.5L251.5 164.5ZM251.5 163.5L253.5 161.5L255.5 163.5L253.5 165.5ZM254.5 163.5L256.5 161.5L258.5 163.5L256.5 165.5ZM257.5 164.5L259.5 162.5L261.5 164.5L259.5 166.5ZM260.5 164.5L262.5 162.5L264.5 164.5L262.5 166.5ZM262.5 165.5L264.5 163.5L266.5 165.5L264.5 167.5ZM265.5 165.5L267.5 163.5L269.5 165.5L267.5 167.5ZM268.5 166.5L270.5 164.5L272.5 166.5L270.5 168.5ZM270.5 166.5L272.5 164.5L274.5 166.5L272.5 168.5ZM273.5 167.5L275.5 165.5L277.5 167.5L275.5 169.5ZM276.5 167.5L278.5 165.5L280.5 167.5L278.5 169.5ZM278.5 167.5L280.5 165.5L282.5 167.5L280.5 169.5ZM281.5 168.5L283.5 166.5L285.5 168.5L283.5 170.5ZM284.5 168.5L286.5 166.5L288.5 168.5L286.5 170.5ZM286.5 169.5L288.5 167.5L290.5 169.5L288.5 171.5ZM289.5 170.5L291.5 168.5L293.5 170.5L291.5 172.5ZM292.5 170.5L294.5 168.5L296.5 170.5L294.5 172.5ZM295.5 171.5L297.5 169.5L299.5 171.5L297.5 173.5ZM297.5 171.5L299.5 169.5L301.5 171.5L299.5 173.5ZM300.5 172.5L302.5 170.5L304.5 172.5L302.5 174.5ZM303.5 172.5L305.5 170.5L307.5 172.5L305.5 174.5ZM305.5 173.5L307.5 171.5L309.5 173.5L307.5 175.5ZM308.5 173.5L310.5 171.5L312.5 173.5L310.5 175.5ZM311.5 173.5L313.5 171.5L315.5 173.5L313.5 175.5ZM314.5 174.5L316.5 172.5L318.5 174.5L316.5 176.5ZM316.5 174.5L318.5 172.5L320.5 174.5L318.5 176.5ZM319.5 175.5L321.5 173.5L323.5 175.5L321.5 177.5ZM322.5 175.5L324.5 173.5L326.5 175.5L324.5 177.5ZM324.5 175.5L326.5 173.5L328.5 175.5L326.5 177.5ZM327.5 176.5L329.5 174.5L331.5 176.5L329.5 178.5ZM330.5 176.5L332.5 174.5L334.5 176.5L332.5 178.5ZM332.5 176.5L334.5 174.5L336.5 176.5L334.5 178.5ZM335.5 177.5L337.5 175.5L339.5 177.5L337.5 179.5ZM338.5 177.5L340.5 175.5L342.5 177.5L340.5 179.5ZM340.5 178.5L342.5 176.5L344.5 178.5L342.5 180.5ZM343.5 178.5L345.5 176.5L347.5 178.5L345.5 180.5ZM346.5 179.5L348.5 177.5L350.5 179.5L348.5 181.5ZM349.5 179.5L351.5 177.5L353.5 179.5L351.5 181.5ZM351.5 180.5L353.5 178.5L355.5 180.5L353.5 182.5ZM354.5 180.5L356.5 178.5L358.5 180.5L356.5 182.5ZM357.5 180.5L359.5 178.5L361.5 180.5L359.5 182.5ZM359.5 181.5L361.5 179.5L363.5 181.5L361.5 183.5ZM362.5 182.5L364.5 180.5L366.5 182.5L364.5 184.5ZM365.5 182.5L367.5 180.5L369.5 182.5L367.5 184.5ZM368.5 182.5L370.5 180.5L372.5 182.5L370.5 184.5ZM370.5 182.5L372.5 180.5L374.5 182.5L372.5 184.5ZM373.5 183.5L375.5 181.5L377.5 183.5L375.5 185.5ZM376.5 183.5L378.5 181.5L380.5 183.5L378.5 185.5ZM378.5 183.5L380.5 181.5L382.5 183.5L380.5 185.5ZM381.5 184.5L383.5 182.5L385.5 184.5L383.5 186.5ZM384.5 184.5L386.5 182.5L388.5 184.5L386.5 186.5ZM386.5 185.5L388.5 183.5L390.5 185.5L388.5 187.5ZM389.5 185.5L391.5 183.5L393.5 185.5L391.5 187.5ZM392.5 185.5L394.5 183.5L396.5 185.5L394.5 187.5ZM394.5 186.5L396.5 184.5L398.5 186.5L396.5 188.5ZM397.5 187.5L399.5 185.5L401.5 187.5L399.5 189.5ZM400.5 187.5L402.5 185.5L404.5 187.5L402.5 189.5ZM403.5 188.5L405.5 186.5L407.5 188.5L405.5 190.5ZM405.5 188.5L407.5 186.5L409.5 188.5L407.5 190.5ZM408.5 189.5L410.5 187.5L412.5 189.5L410.5 191.5ZM411.5 189.5L413.5 187.5L415.5 189.5L413.5 191.5ZM413.5 190.5L415.5 188.5L417.5 190.5L415.5 192.5ZM416.5 190.5L418.5 188.5L420.5 190.5L418.5 192.5ZM419.5 190.5L421.5 188.5L423.5 190.5L421.5 192.5ZM422.5 190.5L424.5 188.5L426.5 190.5L424.5 192.5ZM424.5 191.5L426.5 189.5L428.5 191.5L426.5 193.5ZM427.5 191.5L429.5 189.5L431.5 191.5L429.5 193.5ZM430.5 192.5L432.5 190.5L434.5 192.5L432.5 194.5ZM432.5 192.5L434.5 190.5L436.5 192.5L434.5 194.5ZM435.5 193.5L437.5 191.5L439.5 193.5L437.5 195.5ZM438.5 193.5L440.5 191.5L442.5 193.5L440.5 195.5ZM440.5 194.5L442.5 192.5L444.5 194.5L442.5 196.5ZM443.5 193.5L445.5 191.5L447.5 193.5L445.5 195.5ZM446.5 194.5L448.5 192.5L450.5 194.5L448.5 196.5ZM448.5 194.5L450.5 192.5L452.5 194.5L450.5 196.5ZM451.5 195.5L453.5 193.5L455.5 195.5L453.5 197.5ZM454.5 195.5L456.5 193.5L458.5 195.5L456.5 197.5ZM457.5 195.5L459.5 193.5L461.5 195.5L459.5 197.5ZM459.5 195.5L461.5 193.5L463.5 195.5L461.5 197.5ZM462.5 195.5L464.5 193.5L466.5 195.5L464.5 197.5ZM465.5 196.5L467.5 194.5L469.5 196.5L467.5 198.5ZM467.5 196.5L469.5 194.5L471.5 196.5L469.5 198.5ZM470.5 196.5L472.5 194.5L474.5 196.5L472.5 198.5ZM473.5 197.5L475.5 195.5L477.5 197.5L475.5 199.5ZM476.5 197.5L478.5 195.5L480.5 197.5L478.5 199.5ZM478.5 198.5L480.5 196.5L482.5 198.5L480.5 200.5ZM481.5 198.5L483.5 196.5L485.5 198.5L483.5 200.5ZM484.5 199.5L486.5 197.5L488.5 199.5L486.5 201.5ZM486.5 199.5L488.5 197.5L490.5 199.5L488.5 201.5ZM489.5 200.5L491.5 198.5L493.5 200.5L491.5 202.5ZM492.5 200.5L494.5 198.5L496.5 200.5L494.5 202.5ZM494.5 200.5L496.5 198.5L498.5 200.5L496.5 202.5ZM497.5 200.5L499.5 198.5L501.5 200.5L499.5 202.5ZM500.5 200.5L502.5 198.5L504.5 200.5L502.5 202.5ZM503.5 201.5L505.5 199.5L507.5 201.5L505.5 203.5ZM505.5 201.5L507.5 199.5L509.5 201.5L507.5 203.5ZM508.5 202.5L510.5 200.5L512.5 202.5L510.5 204.5ZM511.5 201.5L513.5 199.5L515.5 201.5L513.5 203.5ZM513.5 202.5L515.5 200.5L517.5 202.5L515.5 204.5ZM516.5 203.5L518.5 201.5L520.5 203.5L518.5 205.5ZM519.5 203.5L521.5 201.5L523.5 203.5L521.5 205.5ZM521.5 203.5L523.5 201.5L525.5 203.5L523.5 205.5ZM524.5 204.5L526.5 202.5L528.5 204.5L526.5 206.5ZM527.5 204.5L529.5 202.5L531.5 204.5L529.5 206.5ZM530.5 204.5L532.5 202.5L534.5 204.5L532.5 206.5ZM532.5 205.5L534.5 203.5L536.5 205.5L534.5 207.5ZM535.5 205.5L537.5 203.5L539.5 205.5L537.5 207.5ZM538.5 205.5L540.5 203.5L542.5 205.5L540.5 207.5ZM540.5 205.5L542.5 203.5L544.5 205.5L542.5 207.5ZM543.5 205.5L545.5 203.5L547.5 205.5L545.5 207.5ZM546.5 205.5L548.5 203.5L550.5 205.5L548.5 207.5ZM548.5 205.5L550.5 203.5L552.5 205.5L550.5 207.5ZM551.5 206.5L553.5 204.5L555.5 206.5L553.5 208.5ZM554.5 207.5L556.5 205.5L558.5 207.5L556.5 209.5ZM556.5 207.5L558.5 205.5L560.5 207.5L558.5 209.5ZM559.5 207.5L561.5 205.5L563.5 207.5L561.5 209.5ZM562.5 207.5L564.5 205.5L566.5 207.5L564.5 209.5ZM565.5 207.5L567.5 205.5L569.5 207.5L567.5 209.5ZM567.5 207.5L569.5 205.5L571.5 207.5L569.5 209.5ZM570.5 207.5L572.5 205.5L574.5 207.5L572.5 209.5ZM573.5 208.5L575.5 206.5L577.5 208.5L575.5 210.5ZM575.5 208.5L577.5 206.5L579.5 208.5L577.5 210.5ZM578.5 208.5L580.5 206.5L582.5 208.5L580.5 210.5ZM581.5 208.5L583.5 206.5L585.5 208.5L583.5 210.5ZM584.5 208.5L586.5 206.5L588.5 208.5L586.5 210.5ZM586.5 208.5L588.5 206.5L590.5 208.5L588.5 210.5ZM589.5 208.5L591.5 206.5L593.5 208.5L591.5 210.5ZM592.5 208.5L594.5 206.5L596.5 208.5L594.5 210.5ZM594.5 209.5L596.5 207.5L598.5 209.5L596.5 211.5ZM597.5 209.5L599.5 207.5L601.5 209.5L599.5 211.5ZM600.5 209.5L602.5 207.5L604.5 209.5L602.5 211.5ZM602.5 209.5L604.5 207.5L606.5 209.5L604.5 211.5ZM605.5 210.5L607.5 208.5L609.5 210.5L607.5 212.5ZM608.5 210.5L610.5 208.5L612.5 210.5L610.5 212.5ZM610.5 210.5L612.5 208.5L614.5 210.5L612.5 212.5ZM613.5 210.5L615.5 208.5L617.5 210.5L615.5 212.5ZM616.5 211.5L618.5 209.5L620.5 211.5L618.5 213.5ZM619.5 210.5L621.5 208.5L623.5 210.5L621.5 212.5ZM621.5 211.5L623.5 209.5L625.5 211.5L623.5 213.5ZM624.5 211.5L626.5 209.5L628.5 211.5L626.5 213.5ZM627.5 211.5L629.5 209.5L631.5 211.5L629.5 213.5ZM629.5 211.5L631.5 209.5L633.5 211.5L631.5 213.5ZM632.5 211.5L634.5 209.5L636.5 211.5L634.5 213.5ZM635.5 212.5L637.5 210.5L639.5 212.5L637.5 214.5ZM638.5 212.5L640.5 210.5L642.5 212.5L640.5 214.5ZM640.5 212.5L642.5 210.5L644.5 212.5L642.5 214.5ZM643.5 212.5L645.5 210.5L647.5 212.5L645.5 214.5ZM646.5 212.5L648.5 210.5L650.5 212.5L648.5 214.5ZM648.5 212.5L650.5 210.5L652.5 212.5L650.5 214.5ZM651.5 212.5L653.5 210.5L655.5 212.5L653.5 214.5ZM654.5 213.5L656.5 211.5L658.5 213.5L656.5 215.5ZM656.5 213.5L658.5 211.5L660.5 213.5L658.5 215.5ZM659.5 212.5L661.5 210.5L663.5 212.5L661.5 214.5ZM662.5 211.5L664.5 209.5L666.5 211.5L664.5 213.5ZM664.5 213.5L666.5 211.5L668.5 213.5L666.5 215.5ZM667.5 214.5L669.5 212.5L671.5 214.5L669.5 216.5ZM670.5 213.5L672.5 211.5L674.5 213.5L672.5 215.5ZM673.5 213.5L675.5 211.5L677.5 213.5L675.5 215.5ZM675.5 214.5L677.5 212.5L679.5 214.5L677.5 216.5ZM678.5 213.5L680.5 211.5L682.5 213.5L680.5 215.5ZM681.5 214.5L683.5 212.5L685.5 214.5L683.5 216.5ZM683.5 214.5L685.5 212.5L687.5 214.5L685.5 216.5ZM686.5 214.5L688.5 212.5L690.5 214.5L688.5 216.5ZM689.5 214.5L691.5 212.5L693.5 214.5L691.5 216.5ZM692.5 215.5L694.5 213.5L696.5 215.5L694.5 217.5ZM694.5 215.5L696.5 213.5L698.5 215.5L696.5 217.5ZM697.5 214.5L699.5 212.5L701.5 214.5L699.5 216.5ZM700.5 213.5L702.5 211.5L704.5 213.5L702.5 215.5ZM702.5 214.5L704.5 212.5L706.5 214.5L704.5 216.5ZM705.5 214.5L707.5 212.5L709.5 214.5L707.5 216.5ZM708.5 214.5L710.5 212.5L712.5 214.5L710.5 216.5ZM710.5 215.5L712.5 213.5L714.5 215.5L712.5 217.5ZM713.5 215.5L715.5 213.5L717.5 215.5L715.5 217.5ZM716.5 215.5L718.5 213.5L720.5 215.5L718.5 217.5ZM718.5 216.5L720.5 214.5L722.5 216.5L720.5 218.5ZM721.5 216.5L723.5 214.5L725.5 216.5L723.5 218.5ZM724.5 216.5L726.5 214.5L728.5 216.5L726.5 218.5ZM727.5 216.5L729.5 214.5L731.5 216.5L729.5 218.5ZM729.5 217.5L731.5 215.5L733.5 217.5L731.5 219.5ZM732.5 216.5L734.5 214.5L736.5 216.5L734.5 218.5ZM735.5 216.5L737.5 214.5L739.5 216.5L737.5 218.5ZM737.5 215.5L739.5 213.5L741.5 215.5L739.5 217.5ZM740.5 214.5L742.5 212.5L744.5 214.5L742.5 216.5ZM743.5 216.5L745.5 214.5L747.5 216.5L745.5 218.5ZM746.5 216.5L748.5 214.5L750.5 216.5L748.5 218.5ZM748.5 217.5L750.5 215.5L752.5 217.5L750.5 219.5ZM751.5 217.5L753.5 215.5L755.5 217.5L753.5 219.5ZM754.5 217.5L756.5 215.5L758.5 217.5L756.5 219.5ZM756.5 217.5L758.5 215.5L760.5 217.5L758.5 219.5ZM759.5 217.5L761.5 215.5L763.5 217.5L761.5 219.5ZM762.5 218.5L764.5 216.5L766.5 218.5L764.5 220.5ZM764.5 218.5L766.5 216.5L768.5 218.5L766.5 220.5ZM767.5 218.5L769.5 216.5L771.5 218.5L769.5 220.5ZM770.5 218.5L772.5 216.5L774.5 218.5L772.5 220.5ZM772.5 218.5L774.5 216.5L776.5 218.5L774.5 220.5ZM775.5 219.5L777.5 217.5L779.5 219.5L777.5 221.5ZM778.5 219.5L780.5 217.5L782.5 219.5L780.5 221.5ZM781.5 219.5L783.5 217.5L785.5 219.5L783.5 221.5ZM783.5 220.5L785.5 218.5L787.5 220.5L785.5 222.5ZM786.5 220.5L788.5 218.5L790.5 220.5L788.5 222.5ZM789.5 218.5L791.5 216.5L793.5 218.5L791.5 220.5ZM791.5 217.5L793.5 215.5L795.5 217.5L793.5 219.5ZM794.5 216.5L796.5 214.5L798.5 216.5L796.5 218.5ZM797.5 215.5L799.5 213.5L801.5 215.5L799.5 217.5ZM800.5 214.5L802.5 212.5L804.5 214.5L802.5 216.5ZM802.5 214.5L804.5 212.5L806.5 214.5L804.5 216.5ZM805.5 213.5L807.5 211.5L809.5 213.5L807.5 215.5ZM808.5 212.5L810.5 210.5L812.5 212.5L810.5 214.5ZM810.5 212.5L812.5 210.5L814.5 212.5L812.5 214.5ZM813.5 211.5L815.5 209.5L817.5 211.5L815.5 213.5ZM816.5 210.5L818.5 208.5L820.5 210.5L818.5 212.5ZM818.5 209.5L820.5 207.5L822.5 209.5L820.5 211.5ZM821.5 209.5L823.5 207.5L825.5 209.5L823.5 211.5ZM824.5 208.5L826.5 206.5L828.5 208.5L826.5 210.5ZM826.5 208.5L828.5 206.5L830.5 208.5L828.5 210.5ZM829.5 207.5L831.5 205.5L833.5 207.5L831.5 209.5ZM832.5 206.5L834.5 204.5L836.5 206.5L834.5 208.5ZM835.5 206.5L837.5 204.5L839.5 206.5L837.5 208.5ZM837.5 206.5L839.5 204.5L841.5 206.5L839.5 208.5ZM840.5 205.5L842.5 203.5L844.5 205.5L842.5 207.5ZM843.5 205.5L845.5 203.5L847.5 205.5L845.5 207.5ZM845.5 204.5L847.5 202.5L849.5 204.5L847.5 206.5ZM848.5 203.5L850.5 201.5L852.5 203.5L850.5 205.5ZM851.5 203.5L853.5 201.5L855.5 203.5L853.5 205.5ZM854.5 202.5L856.5 200.5L858.5 202.5L856.5 204.5ZM856.5 202.5L858.5 200.5L860.5 202.5L858.5 204.5ZM859.5 201.5L861.5 199.5L863.5 201.5L861.5 203.5ZM862.5 201.5L864.5 199.5L866.5 201.5L864.5 203.5ZM864.5 201.5L866.5 199.5L868.5 201.5L866.5 203.5ZM867.5 200.5L869.5 198.5L871.5 200.5L869.5 202.5Z" fill="#edb120"/>
<path d="M189.90 761.50L199.10 761.50M191.25 758.25L197.75 764.75M194.50 756.90L194.50 766.10M197.75 758.25L191.25 764.75" stroke="#d9008c" stroke-width="1.5" fill="none"/>
<path d="M324.90 761.50L334.10 761.50M326.25 758.25L332.75 764.75M329.50 756.90L329.50 766.10M332.75 758.25L326.25 764.75" stroke="#d9008c" stroke-width="1.5" fill="none"/>
<path d="M459.90 761.50L469.10 761.50M461.25 758.25L467.75 764.75M464.50 756.90L464.50 766.10M467.75 758.25L461.25 764.75" stroke="#d9008c" stroke-width="1.5" fill="none"/>
<path d="M594.90 761.50L604.10 761.50M596.25 758.25L602.75 764.75M599.50 756.90L599.50 766.10M602.75 758.25L596.25 764.75" stroke="#d9008c" stroke-width="1.5" fill="none"/>
<path d="M729.90 761.50L739.10 761.50M731.25 758.25L737.75 764.75M734.50 756.90L734.50 766.10M737.75 758.25L731.25 764.75" stroke="#d9008c" stroke-width="1.5" fill="none"/>
<path d="M864.90 158.50L874.10 158.50M866.25 155.25L872.75 161.75M869.50 153.90L869.50 163.10M872.75 155.25L866.25 161.75" stroke="#d9008c" stroke-width="1.5" fill="none"/>
<text x="55.5" y="123.9" text-anchor="end" font-size="12" fill="#333">0</text>
<text x="55.5" y="188.0" text-anchor="end" font-size="12" fill="#333">-5</text>
<text x="55.5" y="252.0" text-anchor="end" font-size="12" fill="#333">-10</text>
<text x="55.5" y="316.0" text-anchor="end" font-size="12" fill="#333">-15</text>
<text x="55.5" y="380.1" text-anchor="end" font-size="12" fill="#333">-20</text>
<text x="55.5" y="444.1" text-anchor="end" font-size="12" fill="#333">-25</text>
<text x="55.5" y="508.2" text-anchor="end" font-size="12" fill="#333">-30</text>
<text x="55.5" y="572.2" text-anchor="end" font-size="12" fill="#333">-35</text>
<text x="55.5" y="636.3" text-anchor="end" font-size="12" fill="#333">-40</text>
<text x="55.5" y="700.4" text-anchor="end" font-size="12" fill="#333">-45</text>
<text x="55.5" y="764.4" text-anchor="end" font-size="12" fill="#333">-50</text>
<text x="60.5" y="775.6" text-anchor="middle" font-size="12" fill="#333">0</text>
<text x="195.0" y="775.6" text-anchor="middle" font-size="12" fill="#333">50</text>
<text x="330.0" y="775.6" text-anchor="middle" font-size="12" fill="#333">100</text>
<text x="465.0" y="775.6" text-anchor="middle" font-size="12" fill="#333">150</text>
<text x="600.0" y="775.6" text-anchor="middle" font-size="12" fill="#333">200</text>
<text x="735.0" y="775.6" text-anchor="middle" font-size="12" fill="#333">250</text>
<text x="870.0" y="775.6" text-anchor="middle" font-size="12" fill="#333">300</text>
<text x="465.5" y="790.5" text-anchor="middle" font-size="13" fill="#333">Episode Number</text>
<text transform="translate(32.3 441.2) rotate(-90)" text-anchor="middle" font-size="13" fill="#333">Episode Reward</text>
<text x="466" y="114.2" text-anchor="middle" font-size="13.2" font-weight="bold" fill="#333">Episode reward for rlMDPEnv with rlQAgent</text>
</svg>

<!-- right panel header -->
<div class="t" style="left:907px;top:64px;font-size:13px;color:#1a1a1a">Training Progress</div>
<div class="a" style="left:1182px;top:65px;width:2px;height:2px;background:#555;box-shadow:0 4px 0 #555,0 8px 0 #555"></div>
<div class="a" style="left:878px;top:65px;width:2px;height:2px;background:#555;box-shadow:0 4px 0 #555,0 8px 0 #555"></div>
<!-- progress -->
<div class="a" style="left:911px;top:97px;width:143px;height:15px;background:#fff"></div>
<div class="a" style="left:911px;top:97px;width:8px;height:15px;background:#2c89da"></div>
<div class="a" style="left:1064px;top:92px;width:110px;height:25px;border:1px solid #cdcdcd;border-radius:4px;background:#f3f3f3"></div>
<div class="t" style="left:1075px;top:98px;font-size:12px;color:#a3a3a3">Training stopped</div>
<div class="t lbl" style="left:911px;top:128px">Episode number:</div>
<div class="t lbl" style="left:1034px;top:128px">300/5000</div>
<div class="t lbl" style="left:911px;top:153px">Start time:</div>
<div class="t lbl" style="left:1034px;top:153px">03-Apr-2025 17:33:00</div>
<div class="t lbl" style="left:911px;top:178px">Duration:</div>
<div class="t lbl" style="left:1034px;top:178px">00:03:45</div>
<div class="t lbl" style="left:911px;top:203px">Final result:</div>
<div class="t lbl" style="left:1034px;line-height:14.8px;top:201px">Training finished after all<br>agents reached stop<br>training criteria.</div>
<!-- training information -->
<div class="box" style="left:911px;top:258px;width:263px;height:295px"></div>
<div class="a" style="left:912px;top:278px;width:261px;height:1px;background:#727272"></div>
<div class="t lbl" style="left:916px;top:261px;font-weight:bold">Training Information</div>
<div class="a" style="left:922px;top:289px;width:241px;height:95px;border:1px solid #8c8c8c;background:#fff"></div>
<div class="a" style="left:923px;top:290px;width:239px;height:27px;background:#f3f3f3;border-bottom:1px solid #8c8c8c"></div>
<div class="a" style="left:923px;top:317px;width:239px;height:23px;background:#2a8ade;border-bottom:1px solid #8c8c8c"></div>
<div class="a" style="left:1042px;top:290px;width:1px;height:49px;background:#8c8c8c"></div>
<div class="t lbl" style="left:926px;top:297px;font-weight:bold">Agent</div>
<div class="t lbl" style="left:1046px;top:297px;font-weight:bold">Status</div>
<div class="t lbl" style="left:926px;top:320px;color:#fff;-webkit-text-stroke:0.35px #fff">rlQAgent</div>
<div class="t lbl" style="left:1046px;top:320px;color:#fff;-webkit-text-stroke:0.35px #fff">Training finished</div>
<div class="t lbl" style="left:923px;top:395px;font-weight:bold">Episode Information (rlQAgent):</div>
<div class="t lbl" style="left:923px;top:420px">Episode reward:</div>
<div class="t lbl" style="left:1035px;top:420px">-7</div>
<div class="t lbl" style="left:923px;top:445px">Average reward:</div>
<div class="t lbl" style="left:1035px;top:445px">-3.8</div>
<div class="t lbl" style="left:923px;top:470px">Episode Q0:</div>
<div class="t lbl" style="left:1035px;top:470px">-6.2257</div>
<div class="t lbl" style="left:923px;top:495px">Evaluation statis...</div>
<div class="t lbl" style="left:1035px;top:495px">-3</div>
<div class="a" style="left:1053px;top:519px;width:110px;height:23px;border:1px solid #8a8a8a;border-radius:4px;background:#f7f7f7"></div>
<div class="t lbl" style="left:1069px;top:523.5px">More Details...</div>
<!-- plot options -->
<div class="box" style="left:911px;top:563px;width:263px;height:118px"></div>
<div class="a" style="left:912px;top:583px;width:261px;height:1px;background:#727272"></div>
<div class="t lbl" style="left:916px;top:566px;font-weight:bold">Plot Options</div>
<div class="a" style="left:922px;top:595px;width:14px;height:14px;border:1px solid #555;background:#fff"></div>
<svg class="a" style="left:922px;top:595px" width="14" height="14" viewBox="0 0 14 14"><path d="M2.6 7 L5.3 9.8 L11.6 3.2" stroke="#111" stroke-width="1.9" fill="none"/></svg>
<div class="t lbl" style="left:939px;top:595px">Show EpisodeQ0</div>
<div class="a" style="left:922px;top:622px;width:14px;height:14px;border:1px solid #555;background:#fff"></div>
<svg class="a" style="left:922px;top:622px" width="14" height="14" viewBox="0 0 14 14"><path d="M2.6 7 L5.3 9.8 L11.6 3.2" stroke="#111" stroke-width="1.9" fill="none"/></svg>
<div class="t lbl" style="left:939px;top:622px">Show evaluation statistic</div>
<div class="a" style="left:922px;top:652px;width:14px;height:14px;border:1px solid #555;background:#fff"></div>
<div class="t lbl" style="left:939px;top:651px">Show last N episodes</div>
<div class="a" style="left:1066px;top:647px;width:97px;height:23px;border:1px solid #cfcfcf;background:#f3f3f3"></div>
<div class="t lbl" style="left:1131.5px;top:652px;color:#9c9c9c">5000</div>
<!-- legend -->
<div class="box" style="left:911px;top:691px;width:263px;height:102px"></div>
<div class="a" style="left:917px;top:697px;width:251px;height:90px;background:#fff"></div>
<svg class="a" style="left:917px;top:697px" width="251" height="90" viewBox="917 697 251 90">
<path d="M964 704.5H1005" stroke="#30baec" stroke-width="1"/>
<circle cx="984.5" cy="704.5" r="1.6" fill="#30baec"/>
<path d="M964 723.5H1005" stroke="#0072bd" stroke-width="1"/>
<circle cx="984.5" cy="723.5" r="1.6" fill="#0072bd"/>
<path d="M964 742.5H1005" stroke="#edb120" stroke-width="1"/>
<circle cx="984.5" cy="742.5" r="1.6" fill="#edb120"/>
<path d="M979.5 770.5H989.5M984.5 765.5V775.5M981 767L988 774M988 767L981 774" stroke="#d9008c" stroke-width="0.9"/>
</svg>
<div class="t" style="left:1008px;top:699px;font-size:10.7px;color:#303030">Episode reward</div>
<div class="t" style="left:1008px;top:718px;font-size:10.7px;color:#303030">Average reward</div>
<div class="t" style="left:1008px;top:737px;font-size:10.7px;color:#303030">Episode Q0</div>
<div class="t" style="left:1008px;top:760px;font-size:10.7px;color:#303030">Evaluation statistic</div>
<div class="t" style="left:1008px;top:772px;font-size:10.7px;color:#303030">(MeanEpisodeReward)</div>
<!-- scroll arrows -->
<svg class="a" style="left:1188px;top:89px" width="9" height="5"><path d="M0.5 4.5H8.5L4.5 0.5Z" fill="#a0a0a0"/></svg>
<svg class="a" style="left:1188px;top:801px" width="9" height="6"><path d="M0.5 0.5H8.5L4.5 5Z" fill="#9a9a9a"/></svg>
<!-- status bar icon -->
<svg class="a" style="left:1186px;top:820px" width="10" height="12"><path d="M0 0L7 6L0 12Z" fill="#8c8c8c"/><rect x="7" y="0" width="2" height="12" fill="#8c8c8c"/></svg>

</body></html>
